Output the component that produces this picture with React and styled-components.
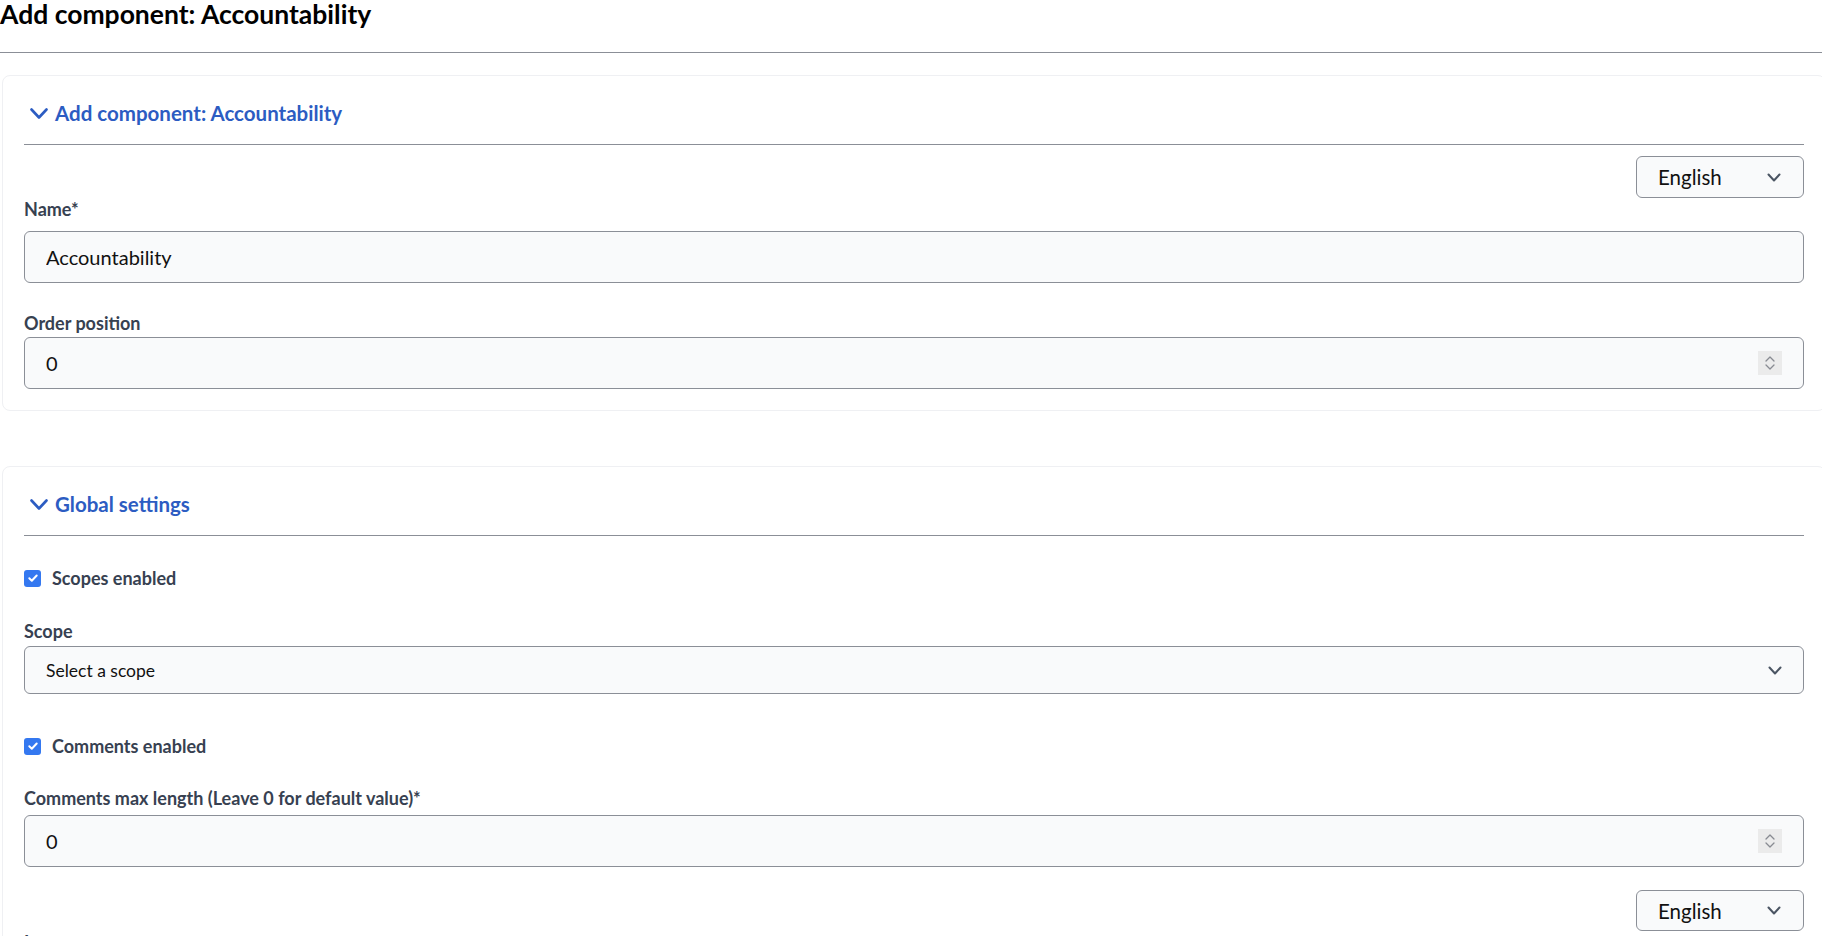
import React from 'react';
import styled, { createGlobalStyle } from 'styled-components';

const GlobalStyle = createGlobalStyle`
    html, body {
        margin: 0;
        padding: 0;
        overflow: hidden;
        background: #ffffff;
    }
    body {
        font-family: Lato, "Liberation Sans", sans-serif;
        color: #111827;
    }
`;

const Page = styled('div')`
    width: 1822px;
    display: flex;
    flex-direction: column;
`;

const Title = styled('h1')`
    margin: 0;
    font-size: 26.5px;
    line-height: 29px;
    font-weight: 700;
    color: #000;
`;

const Rule = styled('div')`
    height: 1px;
    margin-top: 23px;
    background: #8b8f97;
`;

const Card = styled('section')`
    margin: ${(p) => p.$top}px -4px 0 2px;
    padding: 0 21px 21px 21px;
    border: 1px solid #eff0f3;
    border-radius: 8px;
    background: #fff;
`;

const CardHeader = styled('div')`
    display: flex;
    align-items: center;
    gap: 7px;
    padding: 24px 0 18px 6px;
    line-height: 26px;
    font-size: 20.5px;
    font-weight: 700;
    color: #2c5cc2;
    border-bottom: 1px solid #8b8f97;
    cursor: pointer;
`;

const CardBody = styled('div')`
    display: flex;
    flex-direction: column;
`;

const LangRow = styled('div')`
    display: flex;
    justify-content: flex-end;
    margin-top: ${(p) => p.$top}px;
`;

const LangSelect = styled('div')`
    box-sizing: border-box;
    width: 168px;
    height: ${(p) => p.$h}px;
    display: flex;
    align-items: center;
    justify-content: space-between;
    padding: 0 22px 0 21px;
    border: 1px solid #8b8f97;
    border-radius: 6px;
    background: #f9fafb;
    font-size: 20.5px;
    color: #111;
`;

const Label = styled('label')`
    display: block;
    margin-top: ${(p) => p.$top || 0}px;
    margin-bottom: ${(p) => p.$bottom || 0}px;
    font-size: 18px;
    line-height: 20px;
    font-weight: 700;
    color: #374151;
`;

const Field = styled('div')`
    box-sizing: border-box;
    height: ${(p) => p.$h || 52}px;
    display: flex;
    align-items: center;
    justify-content: space-between;
    padding: 0 21px;
    border: 1px solid #8b8f97;
    border-radius: 6px;
    background: #f9fafb;
`;

const FieldInput = styled('input')`
    all: unset;
    flex: 1;
    font-family: inherit;
    font-size: 20px;
    color: #111;
`;

const SelectText = styled('span')`
    font-size: 17.5px;
    color: #111;
`;

const Spinner = styled('div')`
    width: 24px;
    height: 24px;
    display: flex;
    align-items: center;
    justify-content: center;
    background: #ebebeb;
`;

const CheckRow = styled('label')`
    display: flex;
    align-items: center;
    gap: 11px;
    margin-top: ${(p) => p.$top}px;
    line-height: 20px;
    font-size: 18px;
    font-weight: 700;
    color: #374151;
`;

const Box = styled('span')`
    width: 17px;
    height: 17px;
    border-radius: 3px;
    background: #3478f0;
    display: flex;
    align-items: center;
    justify-content: center;
`;

const Chevron = ({ color = '#4b5563', w = 14, h = 9, width = 2 }) => (
    <svg width={w} height={h} viewBox={`0 0 ${w} ${h}`} fill='none'>
        <path d={`M1.5 1.5L${w / 2} ${h - 1.5}L${w - 1.5} 1.5`} stroke={color} strokeWidth={width} strokeLinecap='round' strokeLinejoin='round' />
    </svg>
);

const SpinIcon = () => (
    <svg width='14' height='18' viewBox='0 0 14 18' fill='none'>
        <path d='M3 7l4-4 4 4M3 11l4 4 4-4' stroke='#888b92' strokeWidth='1.3' strokeLinecap='round' strokeLinejoin='round' />
    </svg>
);

const Check = () => (
    <svg width='12' height='12' viewBox='0 0 12 12' fill='none'>
        <path d='M2.3 6.3l2.5 2.4 4.9-5.2' stroke='#fff' strokeWidth='2' strokeLinecap='round' strokeLinejoin='round' />
    </svg>
);

const Language = ({ top, h }) => (
    <LangRow $top={top}>
        <LangSelect $h={h}>
            English
            <Chevron />
        </LangSelect>
    </LangRow>
);

const NumberField = ({ value }) => (
    <Field>
        <FieldInput type='text' defaultValue={value} />
        <Spinner><SpinIcon /></Spinner>
    </Field>
);

export default function App () {
    return (
        <Page>
            <GlobalStyle />
            <Title>Add component: Accountability</Title>
            <Rule />
            <Card $top={22}>
                <CardHeader role='button'>
                    <Chevron color='#2c5cc2' w={18} h={11} width={2.6} />
                    Add component: Accountability
                </CardHeader>
                <CardBody>
                    <Language top={11} h={42} />
                    <Label $top={1} $bottom={12}>Name*</Label>
                    <Field>
                        <FieldInput type='text' defaultValue='Accountability' />
                    </Field>
                    <Label $top={30} $bottom={4}>Order position</Label>
                    <NumberField value='0' />
                </CardBody>
            </Card>
            <Card $top={55}>
                <CardHeader role='button'>
                    <Chevron color='#2c5cc2' w={18} h={11} width={2.6} />
                    Global settings
                </CardHeader>
                <CardBody>
                    <CheckRow $top={32}>
                        <Box><Check /></Box>
                        Scopes enabled
                    </CheckRow>
                    <Label $top={33} $bottom={5}>Scope</Label>
                    <Field $h={48}>
                        <SelectText>Select a scope</SelectText>
                        <Chevron />
                    </Field>
                    <CheckRow $top={42}>
                        <Box><Check /></Box>
                        Comments enabled
                    </CheckRow>
                    <Label $top={32} $bottom={7}>Comments max length (Leave 0 for default value)*</Label>
                    <NumberField value='0' />
                    <Language top={23} h={41} />
                    <Label $top={1} $bottom={12}>Intro</Label>
                    <Field>
                        <FieldInput type='text' defaultValue='' />
                    </Field>
                </CardBody>
            </Card>
        </Page>
    );
}
